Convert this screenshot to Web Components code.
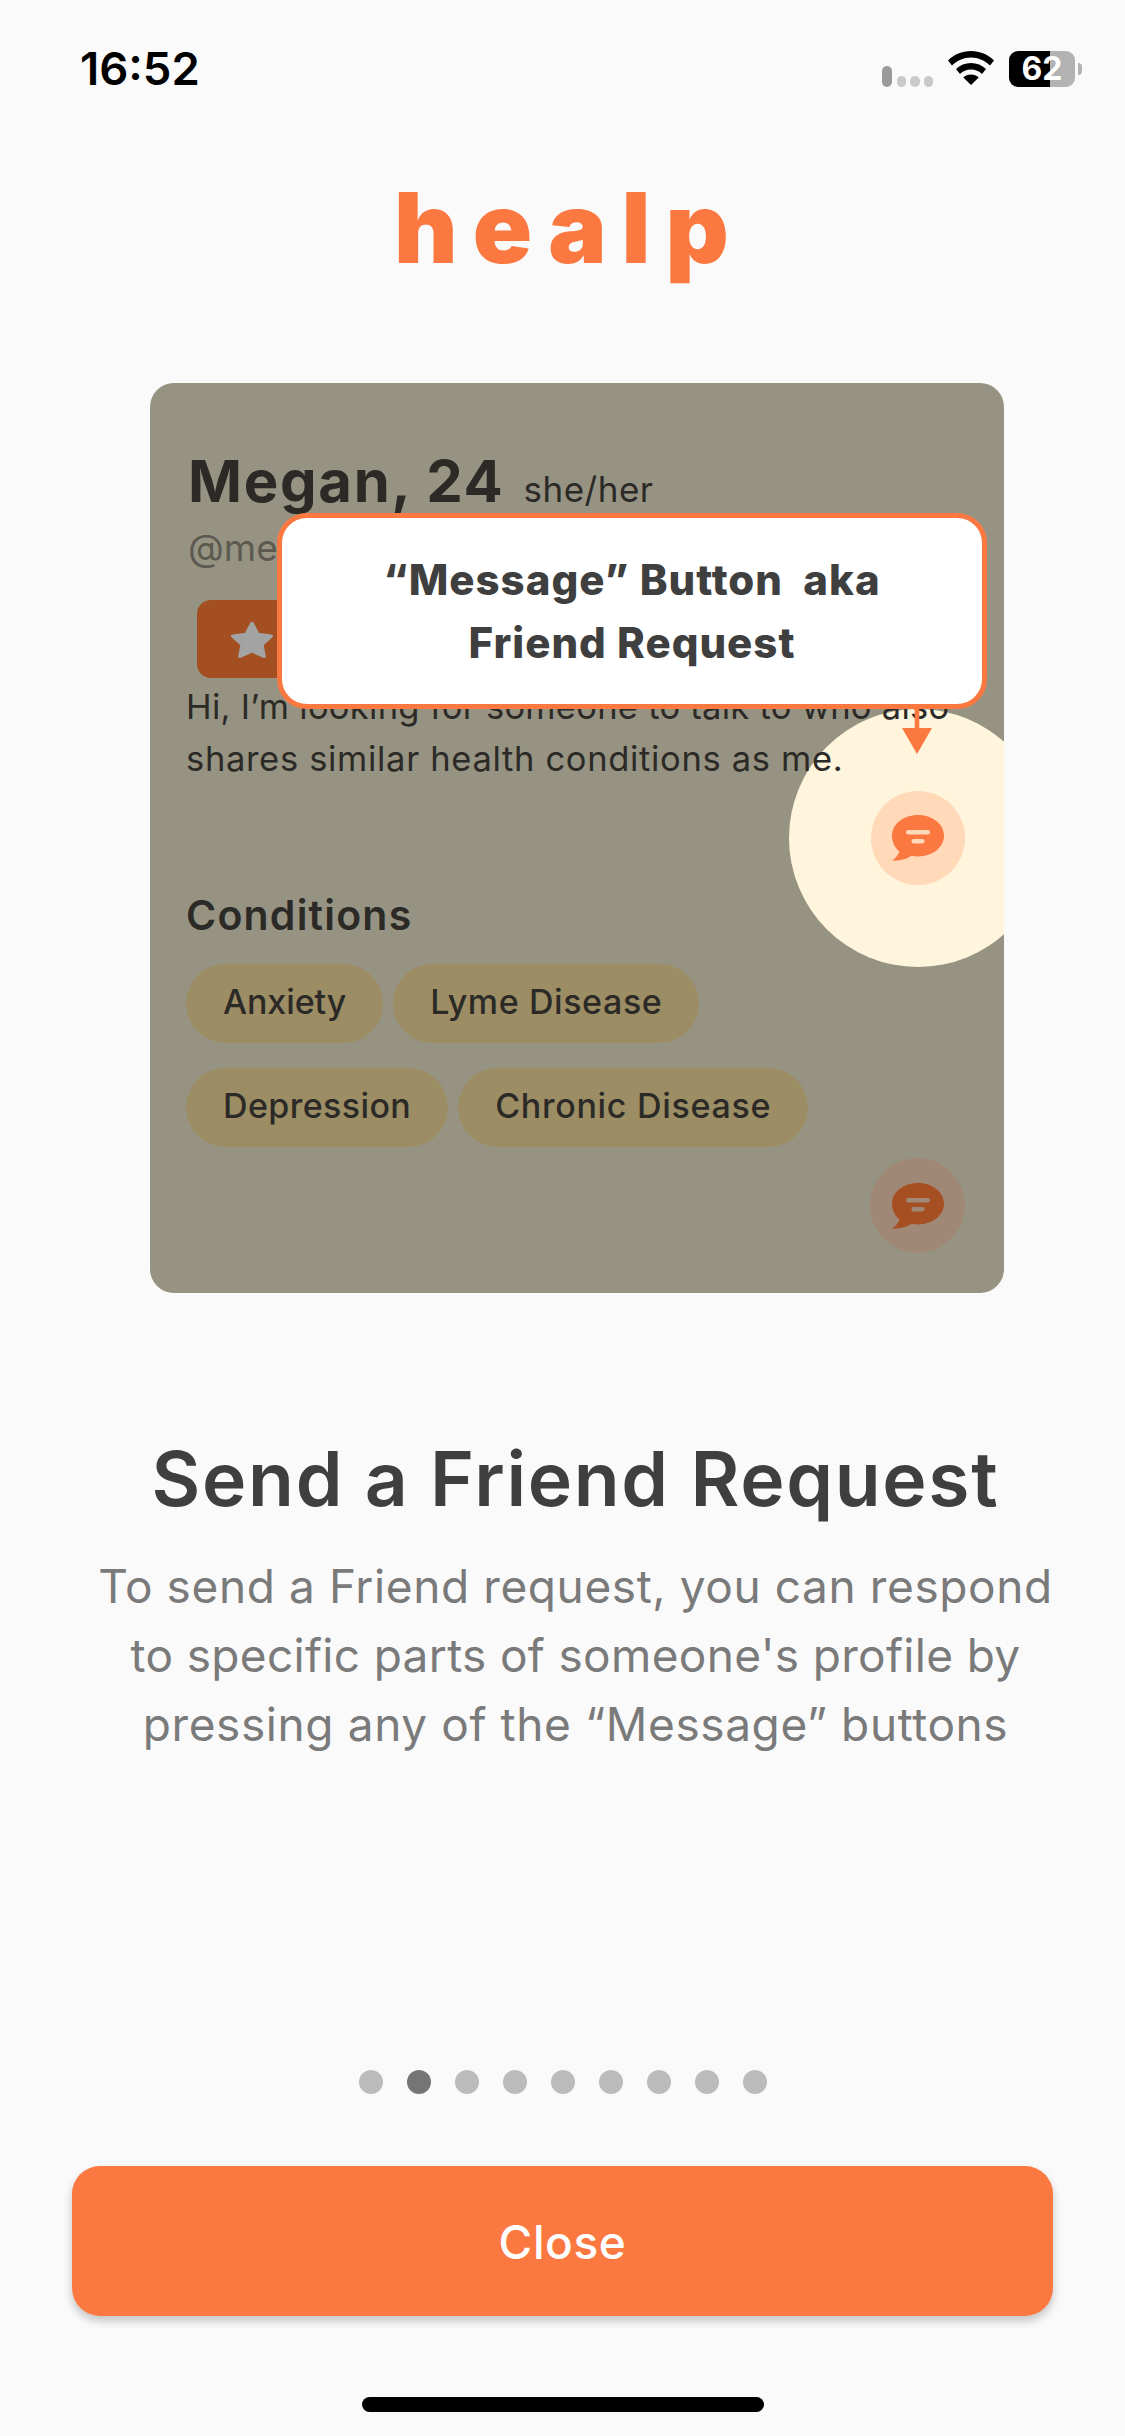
<!DOCTYPE html>
<html lang="en"><head><meta charset="utf-8"><title>healp</title>
<style>html,body{margin:0;padding:0;background:#fafafa;font-family:Inter,"Noto Sans",sans-serif}</style></head>
<body>
<onboard-page>
  <status-bar slot="status"></status-bar>
  <app-logo slot="logo">healp</app-logo>
  <profile-card slot="card"></profile-card>
  <h1 slot="title">Send a Friend Request</h1>
  <span slot="line">To send a Friend request, you can respond</span>
  <span slot="line" style="letter-spacing:.33px">to specific parts of someone's profile by</span>
  <span slot="line">pressing any of the “Message” buttons</span>
  <page-dots slot="dots" count="9" active="1"></page-dots>
  <primary-button slot="action">Close</primary-button>
</onboard-page>
<script>
function def(name, html, setup){
  customElements.define(name, class extends HTMLElement{
    constructor(){super();this.attachShadow({mode:'open'}).innerHTML=typeof html==='function'?html(this):html;}
    connectedCallback(){if(setup)setup(this);}
  });
}
const bubble=(fill,bar)=>`<svg width="52" height="46" viewBox="0 0 52 46" aria-hidden="true"><path fill="${fill}" d="M26 0C40.4 0 52 9.2 52 20.7S40.4 41.4 26 41.4c-2.3 0-4.500-.2-6.600-.7C15 44 8 46 0 45.500c3.400-2 6-5.200 7.400-9C2.800 32.700 0 27 0 20.700 0 9.200 11.600 0 26 0Z"/><rect x="14" y="15" width="24" height="4.500" rx="2.200" fill="${bar}"/><rect x="19.500" y="24" width="13" height="4.500" rx="2.200" fill="${bar}"/></svg>`;

def('status-bar',`<style>
:host{display:flex;height:110px;box-sizing:border-box;padding:0 43px 0 80px;justify-content:space-between;align-items:flex-start;color:#000}
.t{font:600 45.500px/54px Inter,sans-serif;margin-top:42px;letter-spacing:0}
.r{display:flex;align-items:flex-start;margin-top:51px}
.sig{display:flex;gap:4px;align-items:flex-end;margin:15px 15px 0 0;width:51px}
.sig i{display:block;width:11px;height:11px;border-radius:5px;background:#c9c9c9}
.sig i:first-child{height:21px;width:12px;background:#9a9a9a;margin-right:1px}
.bat{width:66px;height:36px;border-radius:9px;margin-left:15px;background:linear-gradient(90deg,#000 0 41px,#b3b3b3 41px);color:#fff;font:700 32px/36px Inter,sans-serif;text-align:center}
.nub{width:4px;height:12px;margin:12px 0 0 3px;background:#b3b3b3;border-radius:0 4px 4px 0}
</style><span class="t">16:52</span><div class="r"><div class="sig"><i></i><i></i><i></i><i></i></div>
<svg width="46" height="34" viewBox="0 0 46 34" aria-hidden="true"><path d="M23 0C14 0 6 3.500 0 9.500l4 5C9 9.500 15.700 6.500 23 6.500s14 3 19 8l4-5C40 3.500 32 0 23 0Z"/><path d="M23 12c-5.700 0-11 2.300-15 6l4 5c2.800-2.700 6.700-4.400 11-4.400S31.200 20.300 34 23l4-5c-4-3.700-9.300-6-15-6Z"/><path d="M23 23.500c-3 0-5.800 1.200-7.700 3L23 34l7.700-7.500c-1.900-1.800-4.700-3-7.700-3Z"/></svg>
<div class="bat">62</div><div class="nub"></div></div>`);

def('app-logo',`<style>
:host{display:block;height:120px;margin-top:58px;text-align:center;color:#fb7840;font:900 98px/120px Inter,sans-serif;letter-spacing:15px;text-indent:13px}
</style><slot></slot>`);

def('h-chip',`<style>
:host{display:inline-flex;align-items:center;height:79px;box-sizing:border-box;padding:0 37px 3px;border-radius:40px;background:#9d8d64;color:#2b2a27;font:500 34px/76px Inter,sans-serif;letter-spacing:.4px;white-space:nowrap}
</style><slot></slot>`);

def('chat-button',`<style>
:host{display:flex;width:94px;height:94px;border-radius:50%;align-items:center;justify-content:center;background:var(--bg,#a08876)}
svg{display:block}
</style>`+'<slot></slot>',el=>{
  if(!el.shadowRoot.querySelector('svg')) el.shadowRoot.innerHTML+=bubble(el.getAttribute('fill'),el.getAttribute('bar'));
});

def('tip-callout',`<style>
:host{position:absolute;left:127px;top:130px;width:710px;height:196px;box-sizing:border-box;border:5px solid #fb7840;border-radius:30px;background:#fff;display:flex;flex-direction:column;justify-content:center;text-align:center;color:#3f3f3f;font:800 42px/63px Inter,sans-serif;letter-spacing:1px;z-index:3}
::slotted(span){display:block;white-space:pre}
svg{position:absolute;left:620px;top:100%;display:block}
</style><slot></slot><svg width="30" height="50" viewBox="0 0 30 50" aria-hidden="true"><path fill="#fb7840" d="M12.700 0h4.600v24H30L15 50 0 24h12.700Z"/></svg>`);

def('spot-light',`<style>
:host{position:absolute;left:639px;top:326px;width:258px;height:258px;border-radius:50%;background:#fff5dc;display:flex;align-items:center;justify-content:center;z-index:1}
</style><slot></slot>`);

def('profile-card',`<style>
:host{display:block;position:relative;overflow:hidden;margin:95px 121px 0 150px;width:854px;box-sizing:border-box;padding:62px 39px 40px 36px;border-radius:24px;background:#979382;color:#2b2a27;font-family:Inter,sans-serif}
.head{display:flex;align-items:baseline;gap:19px;height:72px;margin:0 0 0 2px}
.name{font:700 58px/72px Inter,sans-serif;letter-spacing:1.700px}
.pron{font:400 35px/72px Inter,sans-serif;letter-spacing:.5px}
.handle{margin:6px 0 0 2px;font:400 37px/50px Inter,sans-serif;color:#5c5a50}
.tag{margin:27px 0 0 11px;width:200px;height:78px;border-radius:14px;background:#a34f22;display:flex;align-items:center;padding-left:33px;box-sizing:border-box}
.bio{position:relative;z-index:2;margin:3px 0 0 0;font:400 34.500px/52px Inter,sans-serif;white-space:pre}
.bio span{display:block}
.cond{margin:102px 0 0 0;font:600 41px/56px Inter,sans-serif;letter-spacing:1.200px}
.chips{display:flex;flex-direction:column;gap:25px;margin-top:21px}
.row{display:flex;gap:10px}
.act{display:flex;justify-content:flex-end;margin-top:11px}
.act chat-button{width:95px;height:95px}
</style>
<div class="head"><span class="name">Megan, 24</span><span class="pron">she/her</span></div>
<div class="handle">@me</div>
<div class="tag"><svg width="44" height="37" viewBox="0 0 46 44" preserveAspectRatio="none" aria-hidden="true"><path fill="#a3a3a3" stroke="#a3a3a3" stroke-width="4" stroke-linejoin="round" d="M23 3l6 13 14 2-10 10 2.500 14L23 35.500 10.500 42 13 28 3 18l14-2Z"/></svg></div>
<div class="bio"><span style="letter-spacing:.27px">Hi, I’m looking for someone to talk to who also</span><span style="letter-spacing:.68px">shares similar health conditions as me.</span></div>
<div class="cond">Conditions</div>
<div class="chips"><div class="row"><h-chip style="letter-spacing:-.1px">Anxiety</h-chip><h-chip style="letter-spacing:.6px">Lyme Disease</h-chip></div>
<div class="row"><h-chip>Depression</h-chip><h-chip style="letter-spacing:.7px">Chronic Disease</h-chip></div></div>
<div class="act"><chat-button fill="#a64f23" bar="#a08876"></chat-button></div>
<tip-callout><span>“Message” Button  aka</span><span>Friend Request</span></tip-callout>
<spot-light><chat-button fill="#fb7840" bar="#ffd9b8" style="--bg:#ffd9b8"></chat-button></spot-light>`);

def('page-dots',el=>{
  const n=+el.getAttribute('count'),a=+el.getAttribute('active');let s='';
  for(let i=0;i<n;i++)s+=`<i class="${i===a?'on':''}"></i>`;
  return `<style>:host{display:flex;justify-content:center;gap:24px;height:24px}
i{display:block;width:24px;height:24px;border-radius:50%;background:#bbb}i.on{background:#757575}</style>`+s;
});

def('primary-button',`<style>
:host{display:flex;align-items:center;justify-content:center;margin:72px 72px 0;height:150px;box-sizing:border-box;padding-top:1px;border-radius:28px;background:#fb7840;color:#fff;font:500 46px/148px Inter,sans-serif;letter-spacing:.6px;box-shadow:0 5px 10px rgba(0,0,0,.22)}
</style><slot></slot>`);

def('onboard-page',`<style>
:host{display:flex;flex-direction:column;width:1125px;height:2436px;overflow:hidden;background:#fafafa;font-family:Inter,sans-serif}
::slotted(h1){margin:141px 0 0;padding-left:26px;text-align:center;font:600 75px/90px Inter,sans-serif;color:#3f3f3f;letter-spacing:1.700px}
.copy{margin-top:28px;padding-left:26px;display:flex;flex-direction:column;align-items:center;color:#7a7a7a;font:400 46px/69px Inter,sans-serif;letter-spacing:.6px;height:207px}
.grow{margin-top:311px}
.home{width:402px;height:15px;border-radius:8px;background:#000;margin:81px auto 0}
</style>
<slot name="status"></slot><slot name="logo"></slot><slot name="card"></slot><slot name="title"></slot>
<div class="copy"><slot name="line"></slot></div><div class="grow"><slot name="dots"></slot></div><slot name="action"></slot><div class="home"></div>`);
</script>
</body></html>
